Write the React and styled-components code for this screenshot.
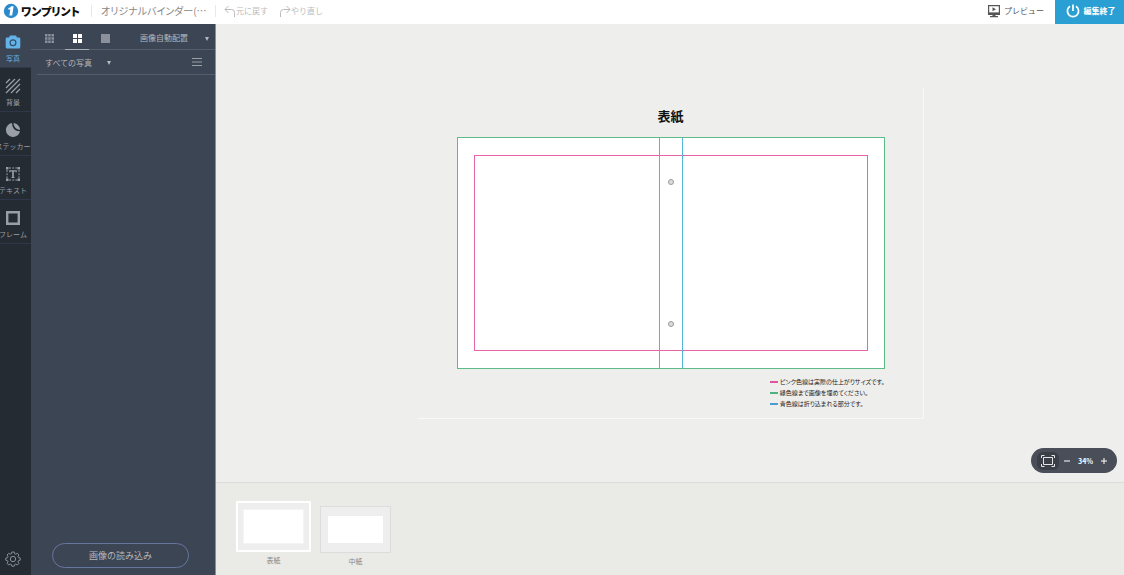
import React, { useState } from 'react';
import styled, { createGlobalStyle } from 'styled-components';

const tabs = [
  { id: 'photo', label: '写真' },
  { id: 'background', label: '背景' },
  { id: 'sticker', label: 'ステッカー' },
  { id: 'text', label: 'テキスト' },
  { id: 'frame', label: 'フレーム' },
];

const legend = [
  { color: '#e0559f', text: 'ピンク色線は実際の仕上がりサイズです。' },
  { color: '#4fb27a', text: '緑色線まで画像を埋めてください。' },
  { color: '#4a9fd0', text: '青色線は折り込まれる部分です。' },
];

function TabIcon({ id }) {
  if (id === 'photo') {
    return (
      <svg width="16" height="16" viewBox="0 0 16 16">
        <path fill="currentColor" d="M5 1.5h6l1 2h2a1.3 1.3 0 0 1 1.3 1.3V13a1.5 1.5 0 0 1-1.5 1.5H2.2A1.5 1.5 0 0 1 .7 13V4.8A1.3 1.3 0 0 1 2 3.5h2z" />
        <circle cx="8" cy="8.8" r="2.9" fill="#64b3e8" stroke="#33506b" strokeWidth="1.2" />
      </svg>
    );
  }
  if (id === 'background') {
    return (
      <svg width="16" height="16" viewBox="0 0 16 16" fill="none" stroke="currentColor" strokeWidth="1.3">
        <path d="M1 5 5 1M1 10 10 1M1 15 15 1M6 15l9-9M11 15l4-4" />
      </svg>
    );
  }
  if (id === 'sticker') {
    return (
      <svg width="16" height="16" viewBox="0 0 16 16" fill="currentColor">
        <path d="M7 .9C7.3 6 9.5 9 15 9.200A7.1 7.1 0 1 1 7 .9z" />
        <path d="M8.5.9c3.5.3 6.3 3.2 6.6 6.9C11.5 7.6 8.9 5.3 8.5.9z" />
      </svg>
    );
  }
  if (id === 'text') {
    return (
      <svg width="16" height="16" viewBox="0 0 16 16" fill="none" stroke="currentColor">
        <path strokeDasharray="2 1.2" d="M4 2h8.5M4 14h8.5M2 4v8.5M14 4v8.5" />
        <path fill="currentColor" stroke="none" d="M1 1h2.500v2.500H1zM12.500 1H15v2.500h-2.500zM1 12.500h2.500V15H1zM12.500 12.500H15V15h-2.500z" />
        <path strokeWidth="1.2" d="M4.8 6.3V4.8h6.4v1.5M6.5 11.5h3" />
        <path strokeWidth="1.7" d="M8 4.8v6.7" />
      </svg>
    );
  }
  return (
    <svg width="16" height="16" viewBox="0 0 16 16" fill="none" stroke="currentColor">
      <path strokeWidth="2.4" d="M2.200 2.200h11.600v11.600H2.200z" />
    </svg>
  );
}

function Header() {
  return (
    <TopBar>
      <Logo href="#home">
        <svg width="16" height="16" viewBox="0 0 16 16">
          <circle cx="8" cy="8" r="7.2" fill="#2a8acb" />
          <path fill="#fff" d="M8 3.3h2.600L9.200 12.500H6.400l.9-6H5.200l.3-1.600C6.800 4.800 7.600 4.300 8 3.300z" />
        </svg>
        <span>ワンプリント</span>
      </Logo>
      <ProductName>オリジナルバインダー(…</ProductName>
      <HistoryButton>
        <svg width="12" height="12" viewBox="0 0 12 12">
          <path d="M4.500 1 1 4.500 4.500 8M1 4.500h6.500a3 3 0 0 1 3 3V12" />
        </svg>
        元に戻す
      </HistoryButton>
      <HistoryButton>
        <svg width="12" height="12" viewBox="0 0 12 12">
          <path d="M7.500 1 11 4.500 7.500 8M11 4.500H4.500a3 3 0 0 0-3 3V12" />
        </svg>
        やり直し
      </HistoryButton>
      <Preview>
        <svg width="14" height="14" viewBox="0 0 14 14">
          <path fill="none" stroke="#555" strokeWidth="1.2" d="M1.600 1.600h10.800v7.800H1.600z" />
          <path fill="#555" d="M1 8.500h12V11H1zM5.500 3.300 9 5.300 5.500 7.300zM5.500 11h3v1H11v1.300H3V12h2.500z" />
        </svg>
        プレビュー
      </Preview>
      <Finish>
        <svg width="14" height="14" viewBox="0 0 14 14" fill="none" stroke="#fff" strokeWidth="1.7">
          <path d="M4 2.300a5.600 5.600 0 1 0 6 0M7 .5v6.500" />
        </svg>
        編集終了
      </Finish>
    </TopBar>
  );
}

function App() {
  const [tab, setTab] = useState('photo');
  const [sheet, setSheet] = useState('表紙');
  const [zoom, setZoom] = useState(34);

  return (
    <Layout>
      <Global />
      <Header />
      <Body>
        <SideNav>
          {tabs.map((t) => (
            <Tab key={t.id} $active={tab === t.id} onClick={() => setTab(t.id)}>
              <TabIcon id={t.id} />
              <span>{t.label}</span>
            </Tab>
          ))}
          <Settings aria-label="設定">
            <svg width="16" height="16" viewBox="0 0 16 16" fill="none" stroke="currentColor">
              <path d="M6.800 1h2.400l.5 1.800 1 .4 1.600-.9 1.600 1.700-.9 1.500.5 1.100 1.700.4v2.200l-1.700.5-.5 1.100.9 1.600-1.600 1.600-1.600-.9-1 .4-.5 1.700H6.800l-.5-1.700-1-.4-1.600.9-1.600-1.600.9-1.600-.5-1.100L.8 9.200V7l1.700-.4.5-1.100L2.100 4l1.600-1.700 1.600.9 1-.4z" />
              <circle cx="8" cy="8" r="2.7" />
            </svg>
          </Settings>
        </SideNav>

        <Panel>
          <PanelTop>
            <ViewButton aria-label="小">
              <svg width="9" height="9" viewBox="0 0 9 9">
                <path d="M0 0h2.500v2.500H0zM3.200 0h2.500v2.500H3.200zM6.500 0H9v2.500H6.500zM0 3.200h2.500v2.500H0zM3.200 3.200h2.500v2.500H3.200zM6.500 3.200H9v2.500H6.500zM0 6.500h2.500V9H0zM3.200 6.500h2.500V9H3.200zM6.500 6.500H9V9H6.500z" />
              </svg>
            </ViewButton>
            <ViewButton aria-label="中" $active>
              <svg width="9" height="9" viewBox="0 0 9 9">
                <path d="M0 0h4v4H0zM5 0h4v4H5zM0 5h4v4H0zM5 5h4v4H5z" />
              </svg>
            </ViewButton>
            <ViewButton aria-label="大">
              <svg width="9" height="9" viewBox="0 0 9 9">
                <path d="M0 0h9v9H0z" />
              </svg>
            </ViewButton>
            <AutoButton>
              画像自動配置
              <Caret />
            </AutoButton>
          </PanelTop>
          <Filter>
            <FilterButton>
              すべての写真
              <Caret />
            </FilterButton>
            <MenuButton aria-label="並べ替え">
              <svg width="10" height="8" viewBox="0 0 10 8" stroke="currentColor">
                <path d="M0 .5h10M0 4h10M0 7.500h10" />
              </svg>
            </MenuButton>
          </Filter>
          <Upload>画像の読み込み</Upload>
        </Panel>

        <Main>
          <Canvas>
            <Stage>
              <h1>表紙</h1>
              <Page>
                <Trim />
                <Spine>
                  <Hole />
                  <Hole />
                </Spine>
              </Page>
              <Legend>
                {legend.map((l) => (
                  <LegendItem key={l.text} $color={l.color}>{l.text}</LegendItem>
                ))}
              </Legend>
            </Stage>
            <ZoomBar>
              <FitButton aria-label="全体表示">
                <svg width="14" height="12" viewBox="0 0 14 12" fill="none" stroke="#e4e5e8">
                  <path d="M.5 3V.5h3M10.500.5h3V3M13.500 9v2.500h-3M3.500 11.500h-3V9M2.500 2.500h9v7h-9z" />
                </svg>
              </FitButton>
              <ZoomButton aria-label="縮小" onClick={() => setZoom(zoom - 1)}>
                <svg width="6" height="6" viewBox="0 0 6 6"><path d="M0 3h6" /></svg>
              </ZoomButton>
              <b>{zoom}%</b>
              <ZoomButton aria-label="拡大" onClick={() => setZoom(zoom + 1)}>
                <svg width="6" height="6" viewBox="0 0 6 6"><path d="M0 3h6M3 0v6" /></svg>
              </ZoomButton>
            </ZoomBar>
          </Canvas>
          <Sheets>
            {['表紙', '中紙'].map((name) => (
              <Sheet key={name} $active={sheet === name} onClick={() => setSheet(name)}>
                <Thumb $active={sheet === name}>
                  <div />
                </Thumb>
                {name}
              </Sheet>
            ))}
          </Sheets>
        </Main>
      </Body>
    </Layout>
  );
}

const Global = createGlobalStyle`
  *{
    box-sizing:border-box;
  }
  body{
    margin:0;
    font-family:"Noto Sans CJK JP", "Noto Sans", sans-serif;
    font-size:8px;
  }
  button{
    font:inherit;
    color:inherit;
    background:none;
    border:0;
    padding:0;
    cursor:pointer;
  }
  svg{
    display:block;
    flex:none;
  }
`

const Layout = styled.div`
  height:100vh;
  display:flex;
  flex-direction:column;
  overflow:hidden;
`

const TopBar = styled.header`
  flex:none;
  height:24px;
  display:flex;
  align-items:center;
  background:#fff;
  color:#666;
  line-height:20px;
  padding-bottom:2px;
`

const Logo = styled.a`
  display:flex;
  align-items:center;
  gap:2px;
  width:91px;
  padding-left:3px;
  color:#111;
  font-size:11px;
  font-weight:900;
  font-feature-settings:"palt";
  text-decoration:none;
  white-space:nowrap;
`

const ProductName = styled.div`
  width:125px;
  padding-left:9px;
  border-left:1px solid #e8e8e8;
  border-right:1px solid #e8e8e8;
  font-size:10px;
  font-feature-settings:"palt";
  line-height:12px;
  color:#888;
  white-space:nowrap;
`

const HistoryButton = styled.button`
  display:flex;
  align-items:center;
  margin-left:8px;
  margin-right:3px;
  color:#bbb;
  svg{
    fill:none;
    stroke:currentColor;
  }
`

const Preview = styled.button`
  display:flex;
  align-items:center;
  gap:3px;
  margin-left:auto;
  margin-right:11px;
  color:#555;
`

const Finish = styled.button`
  display:flex;
  align-items:center;
  justify-content:center;
  gap:4px;
  width:69px;
  height:24px;
  margin-bottom:-2px;
  padding:0 0 2px 2px;
  background:#2a9fd3;
  color:#fff;
  font-weight:700;
`

const Body = styled.div`
  flex:1;
  min-height:0;
  display:flex;
`

const SideNav = styled.nav`
  flex:none;
  width:31px;
  display:flex;
  flex-direction:column;
  overflow:hidden;
  background:#252b32;
`

const Tab = styled.button`
  flex:none;
  height:44px;
  display:flex;
  flex-direction:column;
  align-items:center;
  padding:10px 5px 0 0;
  background:${({$active}) => $active ? '#3c4553' : 'none'};
  border-bottom:1px solid #30374a;
  color:${({$active}) => $active ? '#64b3e8' : '#9a9ea6'};
  font-size:7px;
  line-height:16px;
  span{
    white-space:nowrap;
  }
`

const Settings = styled.button`
  display:flex;
  justify-content:center;
  margin-top:auto;
  padding:0 5px 8px 0;
  color:#8b9098;
`

const Panel = styled.aside`
  flex:none;
  width:185px;
  display:flex;
  flex-direction:column;
  background:#3c4553;
  border-right:1px solid #8a8f96;
  color:#b4b7bd;
`

const PanelTop = styled.div`
  flex:none;
  height:26px;
  display:flex;
  padding:0 6px 0 6px;
  border-bottom:1px solid #535d6d;
`

const ViewButton = styled.button`
  width:24px;
  height:26px;
  margin-right:4px;
  padding-top:3px;
  display:flex;
  align-items:center;
  justify-content:center;
  border-bottom:1px solid ${({$active}) => $active ? '#a9adb4' : 'transparent'};
  svg{
    fill:${({$active}) => $active ? '#fff' : '#8b909b'};
  }
`

const AutoButton = styled.button`
  flex:1;
  display:flex;
  align-items:center;
  justify-content:space-between;
  padding:2px 0 0 19px;
`

const Caret = styled.span`
  margin-top:2px;
  border:solid transparent;
  border-width:4px 2px 0;
  border-top-color:#b4b7bd;
`

const Filter = styled.div`
  flex:none;
  height:25px;
  display:flex;
  align-items:center;
  justify-content:space-between;
  margin-left:6px;
  padding:0 13px 0 8px;
  border-bottom:1px solid #535d6d;
`

const FilterButton = styled.button`
  display:flex;
  align-items:center;
  gap:15px;
`

const MenuButton = styled.button`
  color:#9a9ea6;
`

const Upload = styled.button`
  height:25px;
  margin:auto 26px 7px 21px;
  border:1px solid #6576a0;
  border-radius:13px;
  font-size:9px;
`

const Main = styled.main`
  flex:1;
  min-width:0;
  display:flex;
  flex-direction:column;
`

const Canvas = styled.section`
  flex:1;
  position:relative;
  display:flex;
  align-items:center;
  justify-content:center;
  padding-left:1px;
  background:#eeeeec;
`

const Stage = styled.div`
  width:56%;
  display:flex;
  flex-direction:column;
  align-items:center;
  padding:16px 0 9px;
  border:1px solid #f8f8f7;
  border-top-color:transparent;
  border-left-color:transparent;
  h1{
    margin:0 0 9px;
    font-size:13px;
    line-height:24px;
    color:#111;
  }
`

const Page = styled.div`
  position:relative;
  width:428px;
  max-width:90%;
  aspect-ratio:428 / 232;
  display:flex;
  padding:17px 16px;
  background:#fff;
  border:1px solid #5dbb8a;
`

const Trim = styled.div`
  flex:1;
  border:1px solid #e565a8;
`

// lies over the trim box
const Spine = styled.div`
  position:absolute;
  top:0;
  bottom:0;
  left:50%;
  width:24px;
  margin-left:-12px;
  display:flex;
  flex-direction:column;
  align-items:center;
  justify-content:space-between;
  padding:41px 0;
  border:solid #56b4dc;
  border-width:0 1px;
`

const Hole = styled.span`
  width:6px;
  height:6px;
  border:1px solid #999;
  border-radius:50%;
  background:#ddd;
`

const Legend = styled.ul`
  align-self:flex-end;
  margin:7px 39px 0 0;
  padding:0;
  list-style:none;
  font-size:6px;
  font-feature-settings:"palt";
  line-height:11px;
  color:#222;
`

const LegendItem = styled.li`
  display:flex;
  align-items:center;
  gap:2px;
  &::before{
    content:"";
    width:8px;
    height:2px;
    background:${({$color}) => $color};
  }
`

const ZoomBar = styled.div`
  position:absolute;
  right:7px;
  bottom:9px;
  width:86px;
  height:25px;
  display:flex;
  align-items:center;
  gap:8px;
  padding-left:6px;
  border-radius:13px;
  background:#4a4e59;
  color:#fff;
  font-size:7px;
`

const FitButton = styled.button`
  width:22px;
  height:18px;
  margin-right:-3px;
  display:flex;
  align-items:center;
  justify-content:center;
  border-radius:6px;
  background:#3a3e47;
`

const ZoomButton = styled.button`
  svg{
    stroke:#fff;
  }
`

const Sheets = styled.section`
  flex:none;
  height:93px;
  display:flex;
  gap:9px;
  padding:18px 20px 0;
  background:#eaeae6;
  border-top:1px solid #dcdcda;
`

const Sheet = styled.button`
  align-self:flex-start;
  padding-top:${({$active}) => $active ? '0' : '5px'};
  font-size:7px;
  line-height:16px;
  color:#888;
`

const Thumb = styled.div`
  width:${({$active}) => $active ? '75px' : '71px'};
  height:${({$active}) => $active ? '51px' : '47px'};
  display:flex;
  padding:${({$active}) => $active ? '6px 5px' : '9px 7px'};
  background:#eee;
  border:${({$active}) => $active ? '2px solid #fff' : '1px solid #dcdcdc'};
  div{
    flex:1;
    background:#fff;
    border:${({$active}) => $active ? '1px solid #f4f4f4' : '0'};
  }
`

export default App;
